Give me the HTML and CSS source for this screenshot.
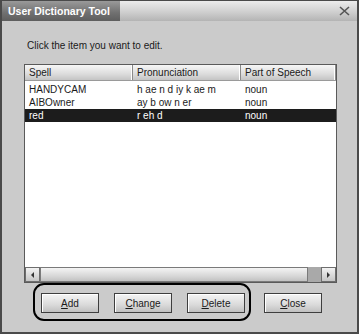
FILE: index.html
```html
<!DOCTYPE html>
<html lang="en">
<head>
    <meta charset="UTF-8">
    <title>User Dictionary Tool</title>
    <link rel="stylesheet" href="styles.css">
</head>
<body>
    <div class="window">
        <!-- Title Bar -->
        <div class="titlebar">
            <div class="title-tab">User Dictionary Tool</div>
            <div class="title-fill">
                <svg class="close-x" width="11" height="10" viewBox="0 0 11 10">
                    <path d="M1 1 L10 9 M10 1 L1 9" stroke="#555" stroke-width="1.6" fill="none"/>
                </svg>
            </div>
        </div>

        <div class="content">
            <p class="hint">Click the item you want to edit.</p>

            <!-- Word List -->
            <div class="listbox">
                <div class="list-head">
                    <div class="col col-spell">Spell</div>
                    <div class="col col-pron">Pronunciation</div>
                    <div class="col col-pos">Part of Speech</div>
                </div>
                <div class="list-body" id="listBody"></div>
                <div class="hscroll">
                    <div class="sb-btn"><span class="arrow-left"></span></div>
                    <div class="sb-thumb"></div>
                    <div class="sb-track"></div>
                    <div class="sb-btn"><span class="arrow-right"></span></div>
                </div>
            </div>

            <!-- Buttons -->
            <div class="buttons">
                <button class="btn"><u>A</u>dd</button>
                <button class="btn"><u>C</u>hange</button>
                <button class="btn"><u>D</u>elete</button>
                <button class="btn btn-close"><u>C</u>lose</button>
            </div>
            <div class="ring"></div>
        </div>
    </div>

    <script>
        const words = [
            { spell: "HANDYCAM", pron: "h ae n d iy k ae m", pos: "noun" },
            { spell: "AIBOwner", pron: "ay b ow n er", pos: "noun" },
            { spell: "red", pron: "r eh d", pos: "noun", selected: true }
        ];

        const listBody = document.getElementById("listBody");
        words.forEach(w => {
            const row = document.createElement("div");
            row.className = w.selected ? "row selected" : "row";
            row.innerHTML = `<div class="col col-spell">${w.spell}</div>` +
                `<div class="col col-pron">${w.pron}</div>` +
                `<div class="col col-pos">${w.pos}</div>`;
            listBody.appendChild(row);
        });
    </script>
</body>
</html>
```

FILE: styles.css
```css
body {
    margin: 0;
    font-family: "Liberation Sans", Arial, sans-serif;
    font-size: 10px;
    color: #1a1a1a;
}
.window {
    width: 359px;
    height: 334px;
    box-sizing: border-box;
    border: 2px solid #4a4a4a;
    border-top-width: 1px;
    background-color: #cbcbcb;
    display: flex;
    flex-direction: column;
}
.titlebar {
    height: 20px;
    display: flex;
}
.title-tab {
    width: 112px;
    background: linear-gradient(#9a9a9a, #707070 60%, #5e5e5e);
    color: #fff;
    font-size: 10.5px;
    font-weight: bold;
    line-height: 20px;
    padding-left: 6px;
}
.title-fill {
    flex: 1;
    background: linear-gradient(#ececec, #cfcfcf 55%, #b4b4b4);
    display: flex;
    justify-content: flex-end;
    align-items: center;
    padding-right: 7px;
}
.content {
    position: relative;
    padding: 0 20px 0 22px;
}
.hint {
    margin: 18px 0 0 3px;
    line-height: 13px;
}
.listbox {
    margin-top: 12px;
    height: 219px;
    box-sizing: border-box;
    border: 1px solid #5a5a5a;
    background-color: #fff;
    display: flex;
    flex-direction: column;
}
.list-head {
    height: 15px;
    display: flex;
    background: linear-gradient(#f6f6f6, #dcdcdc 60%, #c4c4c4);
    border-bottom: 1px solid #9a9a9a;
}
.list-head .col {
    line-height: 15px;
    border-right: 1px solid #8a8a8a;
    box-shadow: inset -1px 0 0 #fff;
}
.col {
    box-sizing: border-box;
    padding-left: 4px;
    white-space: nowrap;
    overflow: hidden;
}
.col-spell { width: 108px; }
.col-pron { width: 108px; }
.col-pos { flex: 1; }
.list-body {
    flex: 1;
    padding-top: 2px;
}
.row {
    display: flex;
    height: 13px;
    line-height: 13px;
}
.row.selected {
    background-color: #1c1c1c;
}
.row.selected .col {
    color: #ffffff;
}
.hscroll {
    height: 15px;
    display: flex;
    background-color: #a9a9a9;
}
.sb-btn {
    width: 15px;
    box-sizing: border-box;
    border: 1px solid #6e6e6e;
    background: linear-gradient(#f2f2f2, #c6c6c6);
    display: flex;
    align-items: center;
    justify-content: center;
}
.sb-thumb {
    width: 268px;
    box-sizing: border-box;
    border: 1px solid #7a7a7a;
    background: linear-gradient(#f4f4f4, #d8d8d8 60%, #c2c2c2);
}
.sb-track {
    flex: 1;
}
.arrow-left {
    border-right: 3px solid #333;
    border-top: 3px solid transparent;
    border-bottom: 3px solid transparent;
}
.arrow-right {
    border-left: 3px solid #333;
    border-top: 3px solid transparent;
    border-bottom: 3px solid transparent;
}
.buttons {
    display: flex;
    margin-top: 10px;
    padding-left: 17px;
    gap: 15px;
}
.btn {
    width: 58px;
    height: 20px;
    padding: 0;
    font-family: inherit;
    font-size: 10px;
    color: #1a1a1a;
    border: 1px solid #3e3e3e;
    background: linear-gradient(#f4f4f4, #dadada 60%, #c0c0c0);
    box-shadow: inset 1px 1px 0 #fff;
}
.btn-close {
    margin-left: 4px;
}
.ring {
    position: absolute;
    left: 31px;
    top: 262px;
    width: 214px;
    height: 34px;
    border: 2px solid #000;
    border-radius: 11px;
}
```
